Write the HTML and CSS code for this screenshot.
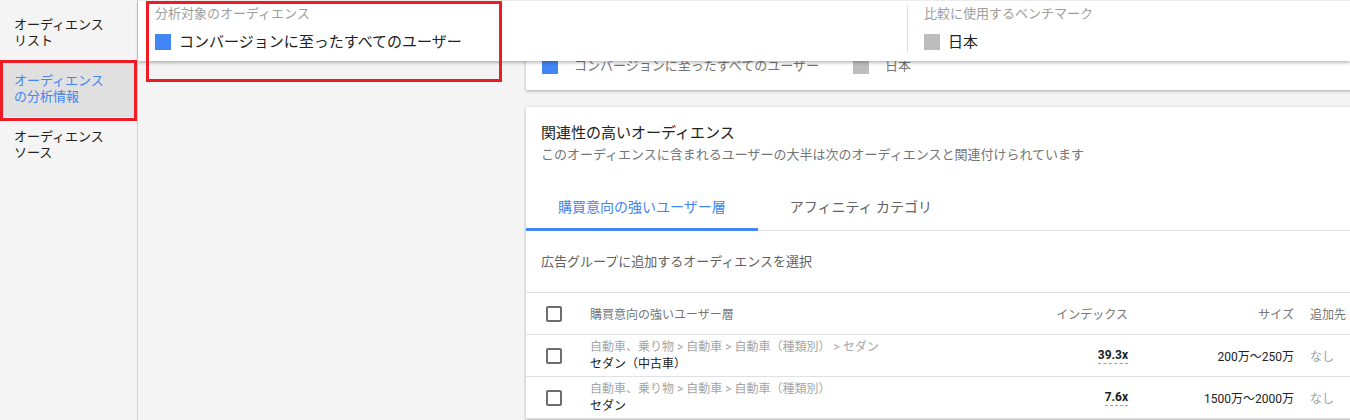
FILE: index.html
```html
<!DOCTYPE html>
<html lang="ja">
<head>
    <meta charset="UTF-8">
    <title>オーディエンスの分析情報</title>
    <link rel="stylesheet" href="styles.css">
</head>
<body>
    <div class="app">
        <nav class="sidebar">
            <a class="nav-item">オーディエンス<br>リスト</a>
            <a class="nav-item active">オーディエンス<br>の分析情報</a>
            <a class="nav-item">オーディエンス<br>ソース</a>
            <div class="mark mark-nav"></div>
        </nav>

        <main class="main">
            <header class="summary">
                <div class="summary-block target">
                    <div class="summary-label">分析対象のオーディエンス</div>
                    <div class="summary-value"><span class="swatch blue"></span>コンバージョンに至ったすべてのユーザー</div>
                </div>
                <div class="summary-block bench">
                    <div class="summary-label">比較に使用するベンチマーク</div>
                    <div class="summary-value"><span class="swatch grey"></span>日本</div>
                </div>
            </header>

            <div class="content">
                <section class="card legend-card">
                    <div class="legend">
                        <span class="swatch blue"></span>
                        <span class="legend-text">コンバージョンに至ったすべてのユーザー</span>
                        <span class="swatch grey"></span>
                        <span class="legend-text">日本</span>
                    </div>
                </section>

                <section class="card related">
                    <div class="card-head">
                        <h2>関連性の高いオーディエンス</h2>
                        <p>このオーディエンスに含まれるユーザーの大半は次のオーディエンスと関連付けられています</p>
                    </div>

                    <div class="tabs">
                        <div class="tab active">購買意向の強いユーザー層</div>
                        <div class="tab">アフィニティ カテゴリ</div>
                    </div>

                    <div class="select-hint">広告グループに追加するオーディエンスを選択</div>

                    <div class="table">
                        <div class="row head">
                            <div class="cell check"><span class="checkbox"></span></div>
                            <div class="cell name">購買意向の強いユーザー層</div>
                            <div class="cell num">インデックス</div>
                            <div class="cell num">サイズ</div>
                            <div class="cell dest">追加先</div>
                        </div>
                        <div class="row">
                            <div class="cell check"><span class="checkbox"></span></div>
                            <div class="cell name">
                                <div class="path">自動車、乗り物 &gt; 自動車 &gt; 自動車（種類別） &gt; セダン</div>
                                <div class="title">セダン（中古車）</div>
                            </div>
                            <div class="cell num"><span class="index">39.3x</span></div>
                            <div class="cell num size">200万～250万</div>
                            <div class="cell dest muted">なし</div>
                        </div>
                        <div class="row">
                            <div class="cell check"><span class="checkbox"></span></div>
                            <div class="cell name">
                                <div class="path">自動車、乗り物 &gt; 自動車 &gt; 自動車（種類別）</div>
                                <div class="title">セダン</div>
                            </div>
                            <div class="cell num"><span class="index">7.6x</span></div>
                            <div class="cell num size">1500万～2000万</div>
                            <div class="cell dest muted">なし</div>
                        </div>
                    </div>
                </section>
            </div>

            <div class="mark mark-summary"></div>
        </main>
    </div>
</body>
</html>
```

FILE: styles.css
```css
body {
    margin: 0;
    font-family: Roboto, "Noto Sans CJK JP", sans-serif;
    color: #212121;
    background: #f4f4f4;
    overflow: hidden;
}
.app {
    display: flex;
    height: 420px;
}

/* left nav */
.sidebar {
    position: relative;
    width: 137px;
    flex-shrink: 0;
    padding-top: 5px;
    background: #f4f4f4;
    border-right: 1px solid #d4d4d4;
}
.nav-item {
    display: block;
    height: 56px;
    box-sizing: border-box;
    padding: 12px 14px;
    font-size: 13px;
    line-height: 16px;
    color: #212121;
}
.nav-item.active {
    background: #e0e0e0;
    color: #4285f4;
}

/* red annotation boxes */
.mark {
    position: absolute;
    border: 3px solid #ed1c24;
    box-sizing: border-box;
    pointer-events: none;
}
.mark-nav { left: 0; top: 60px; width: 137px; height: 61px; }
.mark-summary { left: 8px; top: 1px; width: 356px; height: 81px; z-index: 3; }

.main {
    position: relative;
    flex: 1;
    min-width: 0;
}

/* sticky summary bar */
.summary {
    position: absolute;
    top: 0;
    left: 0;
    right: 0;
    z-index: 2;
    display: flex;
    height: 61px;
    background: #fff;
    border-top: 1px solid #ececec;
    box-sizing: border-box;
    box-shadow: 0 2px 3px rgba(0,0,0,0.25);
}
.summary-block { padding: 4px 0 0 17px; }
.summary-block.target { width: 752px; }
.summary-block.bench {
    border-left: 1px solid #e0e0e0;
    padding-left: 16px;
    margin: 4px 0 8px;
    padding-top: 0;
}
.summary-label {
    font-size: 13px;
    line-height: 18px;
    color: #9e9e9e;
}
.summary-value {
    display: flex;
    align-items: center;
    margin-top: 8px;
    font-size: 15px;
    line-height: 22px;
}
.swatch {
    display: inline-block;
    width: 16px;
    height: 16px;
    margin-right: 8px;
    flex-shrink: 0;
}
.swatch.blue { background: #4285f4; }
.swatch.grey { background: #bdbdbd; }

/* cards */
.content { padding-left: 388px; }
.card {
    width: 860px;
    background: #fff;
    box-shadow: 0 1px 3px rgba(0,0,0,0.3);
}
.legend-card {
    height: 90px;
    display: flex;
    align-items: flex-end;
}
.legend {
    display: flex;
    align-items: center;
    padding: 0 0 15px 16px;
}
.legend .swatch { margin-right: 16px; }
.legend-text {
    font-size: 13px;
    line-height: 18px;
    color: #757575;
    margin-right: 34px;
}

.related { margin-top: 17px; }
.card-head { padding: 16px 15px 0; }
.card-head h2 {
    margin: 0;
    font-size: 15px;
    font-weight: normal;
    line-height: 20px;
}
.card-head p {
    margin: 2px 0 0;
    font-size: 13px;
    line-height: 20px;
    color: #757575;
}

.tabs {
    display: flex;
    margin-top: 21px;
    border-bottom: 1px solid #e0e0e0;
}
.tab {
    padding: 0 32px;
    height: 45px;
    line-height: 43px;
    font-size: 14px;
    color: #616161;
    border-bottom: 2px solid transparent;
    box-sizing: border-box;
    margin-bottom: -1px;
}
.tab.active {
    color: #4285f4;
    border-bottom: 3px solid #4285f4;
}

.select-hint {
    height: 61px;
    line-height: 61px;
    padding-left: 15px;
    font-size: 13px;
    color: #616161;
    border-bottom: 1px solid #e0e0e0;
}

/* table */
.row {
    display: grid;
    grid-template-columns: 64px 438px 100px 166px 92px;
    height: 41px;
    border-bottom: 1px solid #e0e0e0;
    align-items: center;
    font-size: 12px;
}
.row.head { color: #757575; }
.cell.check { padding-left: 20px; display: flex; }
.checkbox {
    width: 16px;
    height: 16px;
    box-sizing: border-box;
    border: 2px solid #6d6d6d;
    border-radius: 2px;
}
.cell.num { text-align: right; }
.cell.dest { padding-left: 16px; }
.path {
    font-size: 12px;
    line-height: 17px;
    color: #a6a6a6;
}
.title {
    font-size: 12px;
    line-height: 17px;
    color: #212121;
}
.index {
    display: inline-block;
    font-weight: bold;
    line-height: 14px;
    padding-bottom: 1px;
    border-bottom: 1px dashed #9e9e9e;
}
.size { color: #212121; }
.muted { color: #9e9e9e; }
```
